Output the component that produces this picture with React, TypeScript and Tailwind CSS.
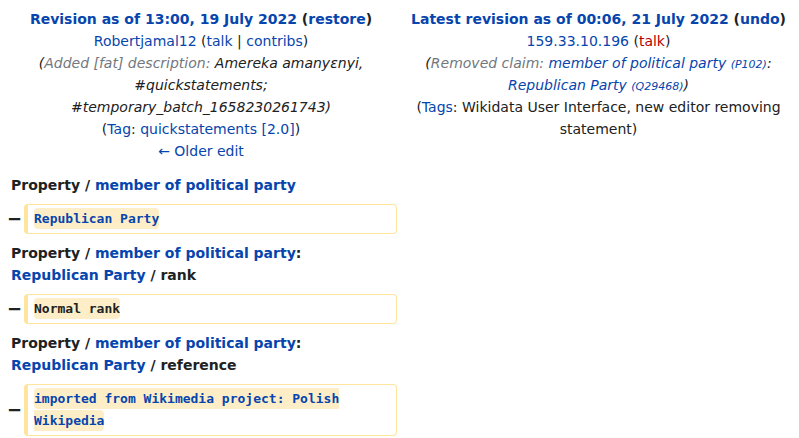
const link = "text-[#0645ad]";

const DiffRow = ({ children }: { children: React.ReactNode }) => (
  <div className="flex items-center mt-2">
    <div className="w-[24px] shrink-0 text-right pr-[2px] font-bold text-[18px] leading-[20px]">−</div>
    <div className="w-[373px] border border-l-4 border-[#ffe49c] rounded-[4px] pt-[3px] pb-[3px] pl-[6px] pr-4 font-['DejaVu_Sans_Mono'] text-[13px] leading-[22px] font-bold">
      {children}
    </div>
  </div>
);

const Change = ({ children, blue }: { children: React.ReactNode; blue?: boolean }) => (
  <span className={`bg-[#feeec8] rounded-[4px] py-[3px] ${blue ? link : "text-[#202122]"}`}>{children}</span>
);

const Heading = ({ children }: { children: React.ReactNode }) => (
  <div className="pl-[11px] font-bold mt-2">{children}</div>
);

export default function App() {
  return (
    <div className="w-[799px] bg-white font-['DejaVu_Sans',sans-serif] text-[14px] leading-[22px] text-[#202122] pt-2">
      <div className="flex">
        <div className="w-[402px] text-center px-2">
          <div className="font-bold">
            <span className={link}>Revision as of 13:00, 19 July 2022</span> (<span className={link}>restore</span>)
          </div>
          <div>
            <span className={link}>Robertjamal12</span> (<span className={link}>talk</span> | <span className={link}>contribs</span>)
          </div>
          <div className="italic px-6">
            (<span className="text-[#72777d]">Added [fat] description: </span>Amereka amanyɛnyi, #quickstatements; #temporary_batch_1658230261743)
          </div>
          <div>
            (<span className={link}>Tag</span>: <span className={link}>quickstatements [2.0]</span>)
          </div>
          <div className={link}>← Older edit</div>
        </div>
        <div className="w-[397px] text-center pl-2 pr-3">
          <div className="font-bold">
            <span className={link}>Latest revision as of 00:06, 21 July 2022</span> (<span className={link}>undo</span>)
          </div>
          <div>
            <span className={link}>159.33.10.196</span> (<span className="text-[#ba0000]">talk</span>)
          </div>
          <div className="italic">
            (<span className="text-[#72777d]">Removed claim: </span>
            <span className={link}>member of political party</span> <span className={`${link} text-[11px] leading-none`}>(P102)</span>:{" "}
            <span className={link}>Republican Party</span> <span className={`${link} text-[11px] leading-none`}>(Q29468)</span>)
          </div>
          <div>
            (<span className={link}>Tags</span>: Wikidata User Interface, new editor removing statement)
          </div>
        </div>
      </div>

      <div className="mt-3">
        <Heading>
          Property / <span className={link}>member of political party</span>
        </Heading>
        <DiffRow>
          <Change blue>Republican Party</Change>
        </DiffRow>
        <Heading>
          Property / <span className={link}>member of political party</span>:<br />
          <span className={link}>Republican Party</span> / rank
        </Heading>
        <DiffRow>
          <Change>Normal rank</Change>
        </DiffRow>
        <Heading>
          Property / <span className={link}>member of political party</span>:<br />
          <span className={link}>Republican Party</span> / reference
        </Heading>
        <DiffRow>
          <Change blue>imported from Wikimedia project: Polish Wikipedia</Change>
        </DiffRow>
      </div>
    </div>
  );
}
